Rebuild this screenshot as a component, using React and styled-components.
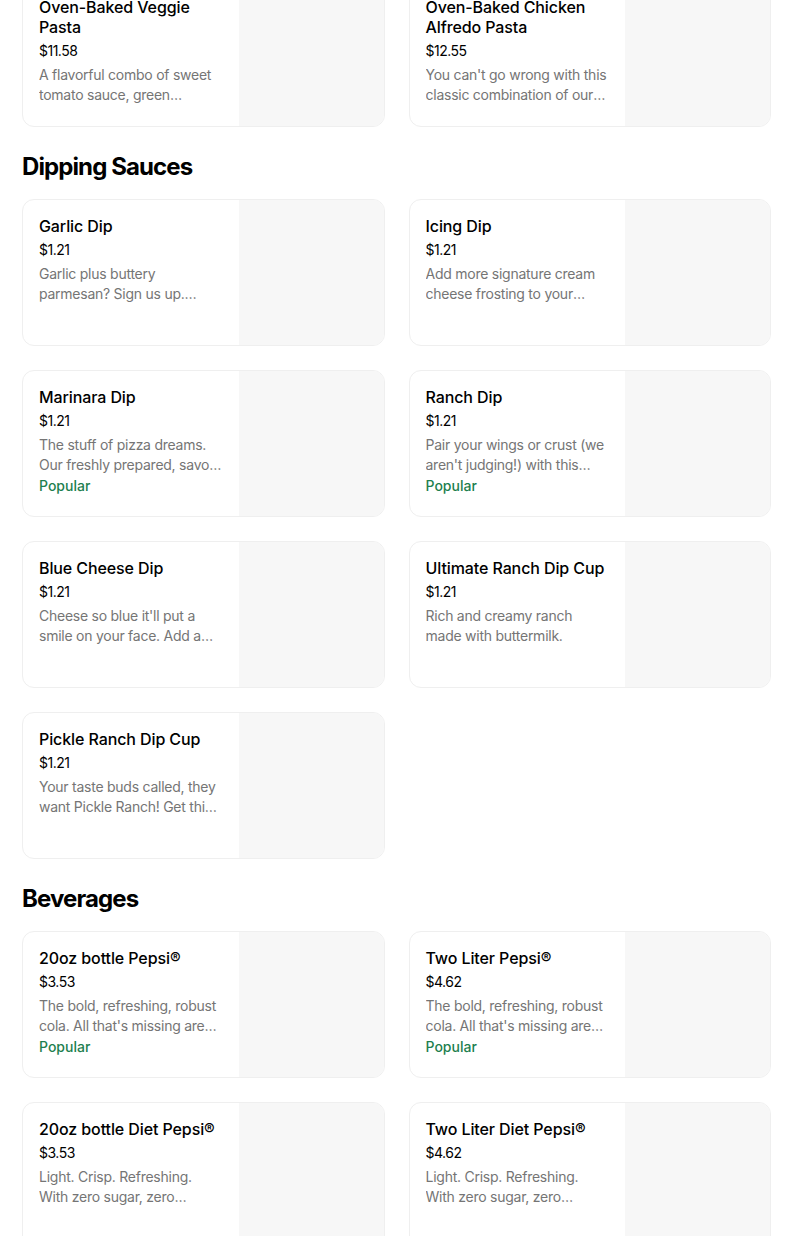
import React from "react";
import styled, { createGlobalStyle } from "styled-components";

const GlobalStyle = createGlobalStyle`
  html, body {
    margin: 0;
    padding: 0;
    background: #ffffff;
    overflow: hidden;
  }
  body {
    font-family: Inter, "Noto Sans", "Liberation Sans", sans-serif;
    color: #000000;
    -webkit-font-smoothing: antialiased;
  }
`;

const Page = styled.div`
  width: 749px;
  margin: -20px 0 0 22px;
  display: flex;
  flex-direction: column;
  gap: 24px;
`;

const Section = styled.section`
  display: flex;
  flex-direction: column;
`;

const Heading = styled.h2`
  margin: 0 0 16px;
  font-size: 24px;
  line-height: 32px;
  font-weight: 700;
  letter-spacing: -0.9px;
`;

const Grid = styled.div`
  display: grid;
  grid-template-columns: 1fr 1fr;
  gap: 24px;
`;

const Card = styled.div`
  height: 147px;
  box-sizing: border-box;
  border: 1px solid #efefef;
  border-radius: 12px;
  overflow: hidden;
  display: grid;
  grid-template-columns: 1fr 145px;
  background: #ffffff;
`;

const Info = styled.div`
  padding: 16px 16px 0 16px;
  display: flex;
  flex-direction: column;
  min-width: 0;
`;

const Title = styled.div`
  font-size: 16px;
  line-height: 20px;
  font-weight: 500;
  letter-spacing: -0.1px;
`;

const Price = styled.div`
  margin-top: 4px;
  font-size: 14px;
  line-height: 20px;
  font-weight: 400;
  letter-spacing: -0.5px;
`;

const Desc = styled.div`
  margin-top: 4px;
  font-size: 14px;
  line-height: 20px;
  color: #757575;
  letter-spacing: -0.25px;
  display: -webkit-box;
  -webkit-line-clamp: 2;
  -webkit-box-orient: vertical;
  overflow: hidden;
`;

const Badge = styled.div`
  margin-top: 1px;
  font-size: 14px;
  line-height: 20px;
  font-weight: 500;
  color: #1e7f4f;
`;

const Thumb = styled.div`
  background: #f7f7f7;
`;

const sections = [
  {
    title: null,
    items: [
      {
        name: "Oven-Baked Veggie Pasta",
        price: "$11.58",
        desc: "A flavorful combo of sweet tomato sauce, green peppers, mushrooms, onions and black olives baked with cheese.",
      },
      {
        name: "Oven-Baked Chicken Alfredo Pasta",
        price: "$12.55",
        desc: "You can't go wrong with this classic combination of our creamy alfredo sauce and grilled chicken.",
      },
    ],
  },
  {
    title: "Dipping Sauces",
    items: [
      {
        name: "Garlic Dip",
        price: "$1.21",
        desc: "Garlic plus buttery parmesan? Sign us up. Great for dipping crust.",
      },
      {
        name: "Icing Dip",
        price: "$1.21",
        desc: "Add more signature cream cheese frosting to your cinnamon treats.",
      },
      {
        name: "Marinara Dip",
        price: "$1.21",
        desc: "The stuff of pizza dreams. Our freshly prepared, savory marinara.",
        popular: true,
      },
      {
        name: "Ranch Dip",
        price: "$1.21",
        desc: "Pair your wings or crust (we aren't judging!) with this cool, creamy ranch.",
        popular: true,
      },
      {
        name: "Blue Cheese Dip",
        price: "$1.21",
        desc: "Cheese so blue it'll put a smile on your face. Add a cup to any order.",
      },
      {
        name: "Ultimate Ranch Dip Cup",
        price: "$1.21",
        desc: "Rich and creamy ranch made with buttermilk.",
      },
      {
        name: "Pickle Ranch Dip Cup",
        price: "$1.21",
        desc: "Your taste buds called, they want Pickle Ranch! Get this tangy dip today.",
      },
    ],
  },
  {
    title: "Beverages",
    items: [
      {
        name: "20oz bottle Pepsi®",
        price: "$3.53",
        desc: "The bold, refreshing, robust cola. All that's missing are your favorite menu items.",
        popular: true,
      },
      {
        name: "Two Liter Pepsi®",
        price: "$4.62",
        desc: "The bold, refreshing, robust cola. All that's missing are your favorite menu items.",
        popular: true,
      },
      {
        name: "20oz bottle Diet Pepsi®",
        price: "$3.53",
        desc: "Light. Crisp. Refreshing. With zero sugar, zero calories.",
      },
      {
        name: "Two Liter Diet Pepsi®",
        price: "$4.62",
        desc: "Light. Crisp. Refreshing. With zero sugar, zero calories.",
      },
    ],
  },
];

function MenuCard({ item }) {
  return (
    <Card>
      <Info>
        <Title>{item.name}</Title>
        <Price>{item.price}</Price>
        <Desc>{item.desc}</Desc>
        {item.popular && <Badge>Popular</Badge>}
      </Info>
      <Thumb />
    </Card>
  );
}

export default function App() {
  return (
    <>
      <GlobalStyle />
      <Page>
        {sections.map((section, i) => (
          <Section key={i}>
            {section.title && <Heading>{section.title}</Heading>}
            <Grid>
              {section.items.map((item) => (
                <MenuCard key={item.name} item={item} />
              ))}
            </Grid>
          </Section>
        ))}
      </Page>
    </>
  );
}
